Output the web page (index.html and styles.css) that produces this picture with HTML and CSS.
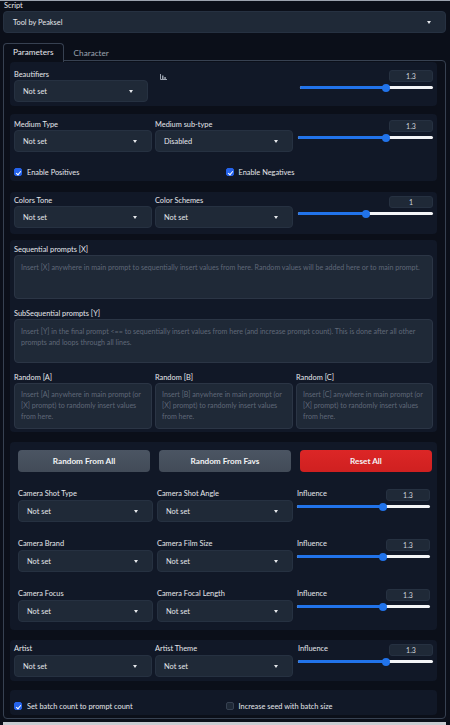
FILE: index.html
```html
<!DOCTYPE html>
<html lang="en">

<head>
    <meta charset="UTF-8" />
    <meta name="viewport" content="width=device-width, initial-scale=1.0" />
    <title>Tool by Peaksel</title>
    <link rel="stylesheet" href="styles.css">
</head>

<body class="app">
    <div class="page">
        <div class="script-label">Script</div>
        <div class="dropdown script-select"><span>Tool by Peaksel</span><i class="caret"></i></div>

        <div class="tabs">
            <div class="tab tab-active">Parameters</div>
            <div class="tab">Character</div>
        </div>

        <div class="tab-panel">
            <!-- beautifiers -->
            <div class="block block-beaut">
                <div class="grid-beaut">
                    <div class="field">
                        <div class="field-label">Beautifiers</div>
                        <div class="dropdown"><span>Not set</span><i class="caret"></i></div>
                    </div>
                    <div class="stats-icon">
                        <svg width="7" height="6" viewBox="0 0 7 6">
                            <path d="M0.5 0 V5.5 H7" stroke="#9ca3af" stroke-width="1" fill="none" />
                            <rect x="2" y="1.5" width="1.5" height="3.5" fill="#9ca3af" />
                            <rect x="4.3" y="3" width="1.5" height="2" fill="#9ca3af" />
                        </svg>
                    </div>
                    <div class="slider">
                        <div class="slider-head"><span></span><div class="num-box">1.3</div></div>
                        <div class="track"><div class="track-fill" style="width: 65%"></div></div>
                    </div>
                </div>
            </div>

            <!-- medium -->
            <div class="block block-medium">
                <div class="grid-3">
                    <div class="field">
                        <div class="field-label">Medium Type</div>
                        <div class="dropdown"><span>Not set</span><i class="caret"></i></div>
                    </div>
                    <div class="field">
                        <div class="field-label">Medium sub-type</div>
                        <div class="dropdown"><span>Disabled</span><i class="caret"></i></div>
                    </div>
                    <div class="slider">
                        <div class="slider-head"><span></span><div class="num-box">1.3</div></div>
                        <div class="track"><div class="track-fill" style="width: 65%"></div></div>
                    </div>
                </div>
                <div class="check-row">
                    <label class="check"><i class="box box-on"></i>Enable Positives</label>
                    <label class="check"><i class="box box-on"></i>Enable Negatives</label>
                </div>
            </div>

            <!-- colors -->
            <div class="block block-colors">
                <div class="grid-3">
                    <div class="field">
                        <div class="field-label">Colors Tone</div>
                        <div class="dropdown"><span>Not set</span><i class="caret"></i></div>
                    </div>
                    <div class="field">
                        <div class="field-label">Color Schemes</div>
                        <div class="dropdown"><span>Not set</span><i class="caret"></i></div>
                    </div>
                    <div class="slider">
                        <div class="slider-head"><span></span><div class="num-box">1</div></div>
                        <div class="track"><div class="track-fill" style="width: 50%"></div></div>
                    </div>
                </div>
            </div>

            <!-- prompts -->
            <div class="block block-prompts">
                <div class="field-label">Sequential prompts [X]</div>
                <textarea class="text-in text-wide" placeholder="Insert [X] anywhere in main prompt to sequentially insert values from here. Random values will be added here or to main prompt."></textarea>
                <div class="field-label gap-top">SubSequential prompts [Y]</div>
                <textarea class="text-in text-wide" placeholder="Insert [Y] in the final prompt <== to sequentially insert values from here (and increase prompt count). This is done after all other prompts and loops through all lines."></textarea>
                <div class="grid-3 gap-top">
                    <div class="field">
                        <div class="field-label">Random [A]</div>
                        <textarea class="text-in text-small" placeholder="Insert [A] anywhere in main prompt (or [X] prompt) to randomly insert values from here."></textarea>
                    </div>
                    <div class="field">
                        <div class="field-label">Random [B]</div>
                        <textarea class="text-in text-small" placeholder="Insert [B] anywhere in main prompt (or [X] prompt) to randomly insert values from here."></textarea>
                    </div>
                    <div class="field">
                        <div class="field-label">Random [C]</div>
                        <textarea class="text-in text-small" placeholder="Insert [C] anywhere in main prompt (or [X] prompt) to randomly insert values from here."></textarea>
                    </div>
                </div>
            </div>

            <!-- camera -->
            <div class="block block-camera">
                <div class="btn-row">
                    <button class="bttn bttn-gray">Random From All</button>
                    <button class="bttn bttn-gray">Random From Favs</button>
                    <button class="bttn bttn-red">Reset All</button>
                </div>
                <div class="cam-row">
                    <div class="field">
                        <div class="field-label">Camera Shot Type</div>
                        <div class="dropdown"><span>Not set</span><i class="caret"></i></div>
                    </div>
                    <div class="field">
                        <div class="field-label">Camera Shot Angle</div>
                        <div class="dropdown"><span>Not set</span><i class="caret"></i></div>
                    </div>
                    <div class="slider">
                        <div class="slider-head"><span class="field-label">Influence</span><div class="num-box">1.3</div></div>
                        <div class="track"><div class="track-fill" style="width: 65%"></div></div>
                    </div>
                </div>
                <div class="cam-row">
                    <div class="field">
                        <div class="field-label">Camera Brand</div>
                        <div class="dropdown"><span>Not set</span><i class="caret"></i></div>
                    </div>
                    <div class="field">
                        <div class="field-label">Camera Film Size</div>
                        <div class="dropdown"><span>Not set</span><i class="caret"></i></div>
                    </div>
                    <div class="slider">
                        <div class="slider-head"><span class="field-label">Influence</span><div class="num-box">1.3</div></div>
                        <div class="track"><div class="track-fill" style="width: 65%"></div></div>
                    </div>
                </div>
                <div class="cam-row">
                    <div class="field">
                        <div class="field-label">Camera Focus</div>
                        <div class="dropdown"><span>Not set</span><i class="caret"></i></div>
                    </div>
                    <div class="field">
                        <div class="field-label">Camera Focal Length</div>
                        <div class="dropdown"><span>Not set</span><i class="caret"></i></div>
                    </div>
                    <div class="slider">
                        <div class="slider-head"><span class="field-label">Influence</span><div class="num-box">1.3</div></div>
                        <div class="track"><div class="track-fill" style="width: 65%"></div></div>
                    </div>
                </div>
            </div>

            <!-- artist -->
            <div class="block block-artist">
                <div class="grid-3">
                    <div class="field">
                        <div class="field-label">Artist</div>
                        <div class="dropdown"><span>Not set</span><i class="caret"></i></div>
                    </div>
                    <div class="field">
                        <div class="field-label">Artist Theme</div>
                        <div class="dropdown"><span>Not set</span><i class="caret"></i></div>
                    </div>
                    <div class="slider">
                        <div class="slider-head"><span class="field-label">Influence</span><div class="num-box">1.3</div></div>
                        <div class="track"><div class="track-fill" style="width: 65%"></div></div>
                    </div>
                </div>
            </div>

            <!-- batch -->
            <div class="block block-batch">
                <div class="check-row">
                    <label class="check"><i class="box box-on"></i>Set batch count to prompt count</label>
                    <label class="check"><i class="box"></i>Increase seed with batch size</label>
                </div>
            </div>
        </div>
        <div class="bottom-strip"></div>
    </div>
</body>

</html>
```

FILE: styles.css
```css
.app {
    margin: 0;
    background-color: #0b0f19;
    color: #e5e7eb;
    font-family: Lato, "Liberation Sans", sans-serif;
    font-size: 7.4px;
}

.page {
    height: 725px;
    box-sizing: border-box;
    border-top: 1px solid #9ca3af;
    padding: 0 4px 0 3px;
    display: flex;
    flex-direction: column;
    overflow: hidden;
}

.script-label {
    height: 9px;
    line-height: 9px;
    padding-left: 1px;
    margin-bottom: 1px;
    color: #e5e7eb;
}

.dropdown {
    height: 22px;
    box-sizing: border-box;
    background-color: #1f2937;
    border: 1px solid #263141;
    border-radius: 4px;
    display: flex;
    align-items: center;
    justify-content: space-between;
    padding: 0 14px 0 8px;
    color: #e5e7eb;
}

.caret {
    width: 0;
    height: 0;
    border-left: 2.5px solid transparent;
    border-right: 2.5px solid transparent;
    border-top: 3px solid #e5e7eb;
}

.script-select {
    padding-left: 9px;
}

.tabs {
    display: flex;
    margin-top: 10px;
    height: 18px;
    position: relative;
    z-index: 1;
}

.tab {
    font-size: 8.2px;
    color: #9ca3af;
    padding: 0 9px;
    line-height: 18px;
    border: 1px solid transparent;
    border-bottom: 0;
}

.tab-active {
    color: #e5e7eb;
    border-color: #374151;
    border-radius: 4px 4px 0 0;
    background-color: #0b0f19;
    height: 19px;
    box-sizing: border-box;
    line-height: 17px;
}

.tab-panel {
    border: 1px solid #374151;
    border-radius: 0 4px 4px 4px;
    padding: 1px 8px 4px 6px;
    height: 659px;
    box-sizing: border-box;
    margin-top: -1px;
    display: flex;
    flex-direction: column;
}

.block {
    background-color: #111827;
    border-radius: 4px;
    padding: 0 4px;
}

.block-beaut {
    padding-top: 8px;
    padding-bottom: 4px;
}

.block-medium {
    margin-top: 8px;
    padding-top: 6px;
    padding-bottom: 3px;
}

.block-colors {
    margin-top: 11px;
    padding-top: 4px;
    padding-bottom: 6px;
}

.block-prompts {
    margin-top: 6px;
    padding-top: 5px;
    padding-bottom: 3px;
}

.block-camera {
    margin-top: 10px;
    padding: 8px 6px 8px 8px;
}

.block-artist {
    margin-top: 10px;
    padding-top: 4px;
    padding-bottom: 4px;
}

.block-batch {
    margin-top: 9px;
    padding-top: 10px;
    padding-bottom: 3px;
}

.field-label {
    height: 10px;
    line-height: 10px;
    color: #e5e7eb;
    white-space: nowrap;
}

.gap-top {
    margin-top: 10px;
}

.grid-beaut {
    display: grid;
    grid-template-columns: 134px 1fr 133px;
}

.stats-icon {
    padding: 3px 0 0 12px;
}

.grid-3 {
    display: grid;
    grid-template-columns: 138px 138px 1fr;
    column-gap: 3px;
}

.grid-3 > .slider {
    margin-left: 2px;
}

.slider-head {
    height: 12px;
    display: flex;
    justify-content: space-between;
    align-items: flex-start;
}

.num-box {
    width: 44px;
    height: 12px;
    box-sizing: border-box;
    background-color: #1f2937;
    border: 1px solid #263141;
    border-radius: 3px;
    text-align: center;
    line-height: 10px;
    font-size: 7px;
    color: #d1d5db;
}

.track {
    position: relative;
    margin-top: 4px;
    height: 3px;
    border-radius: 2px;
    background-color: #f3f4f6;
}

.track-fill {
    height: 3px;
    border-radius: 2px;
    background-color: #2173ea;
    position: relative;
}

.track-fill::after {
    content: "";
    position: absolute;
    right: -4px;
    top: -2.5px;
    width: 8px;
    height: 8px;
    border-radius: 50%;
    background-color: #2173ea;
}

.check-row {
    display: grid;
    grid-template-columns: 1fr 1fr;
    column-gap: 4px;
    margin-top: 14px;
    height: 12px;
}

.block-batch .check-row {
    margin-top: 0;
}

.check {
    display: flex;
    align-items: center;
    color: #e5e7eb;
}

.box {
    width: 8px;
    height: 8px;
    box-sizing: border-box;
    border-radius: 2px;
    margin-right: 5px;
    border: 1px solid #374151;
    background-color: #1f2937;
    position: relative;
}

.box-on {
    background-color: #2563eb;
    border-color: #2563eb;
}

.box-on::after {
    content: "";
    position: absolute;
    left: 2px;
    top: 0.5px;
    width: 2px;
    height: 4px;
    border-right: 1px solid #fff;
    border-bottom: 1px solid #fff;
    transform: rotate(40deg);
}

.text-in {
    display: block;
    width: 100%;
    box-sizing: border-box;
    resize: none;
    background-color: #1f2937;
    border: 1px solid #2b3545;
    border-radius: 4px;
    padding: 6px 6px;
    margin: 0;
    font-family: Lato, "Liberation Sans", sans-serif;
    font-size: 7.1px;
    line-height: 11px;
    color: #e5e7eb;
    outline: none;
}

.text-in::placeholder {
    color: #5f6877;
}

.text-wide {
    height: 44px;
}

.text-small {
    height: 46px;
    padding-top: 5px;
}

.btn-row {
    display: grid;
    grid-template-columns: 132px 132px 132px;
    column-gap: 9px;
}

.bttn {
    height: 22px;
    border: 0;
    border-radius: 4px;
    font-family: Lato, "Liberation Sans", sans-serif;
    font-weight: 700;
    font-size: 8.2px;
    color: #f3f4f6;
}

.bttn-gray {
    background: linear-gradient(#4b5563, #424b58);
}

.bttn-red {
    background: linear-gradient(#dc2626, #cf2020);
}

.cam-row {
    display: grid;
    grid-template-columns: 135px 136px 133px;
    column-gap: 4px;
    margin-top: 17px;
}

.cam-row .field-label,
.block-artist .field-label {
    margin-bottom: 1px;
}

.bottom-strip {
    margin-top: auto;
    height: 3px;
    background-color: #c9ccd1;
}
```
